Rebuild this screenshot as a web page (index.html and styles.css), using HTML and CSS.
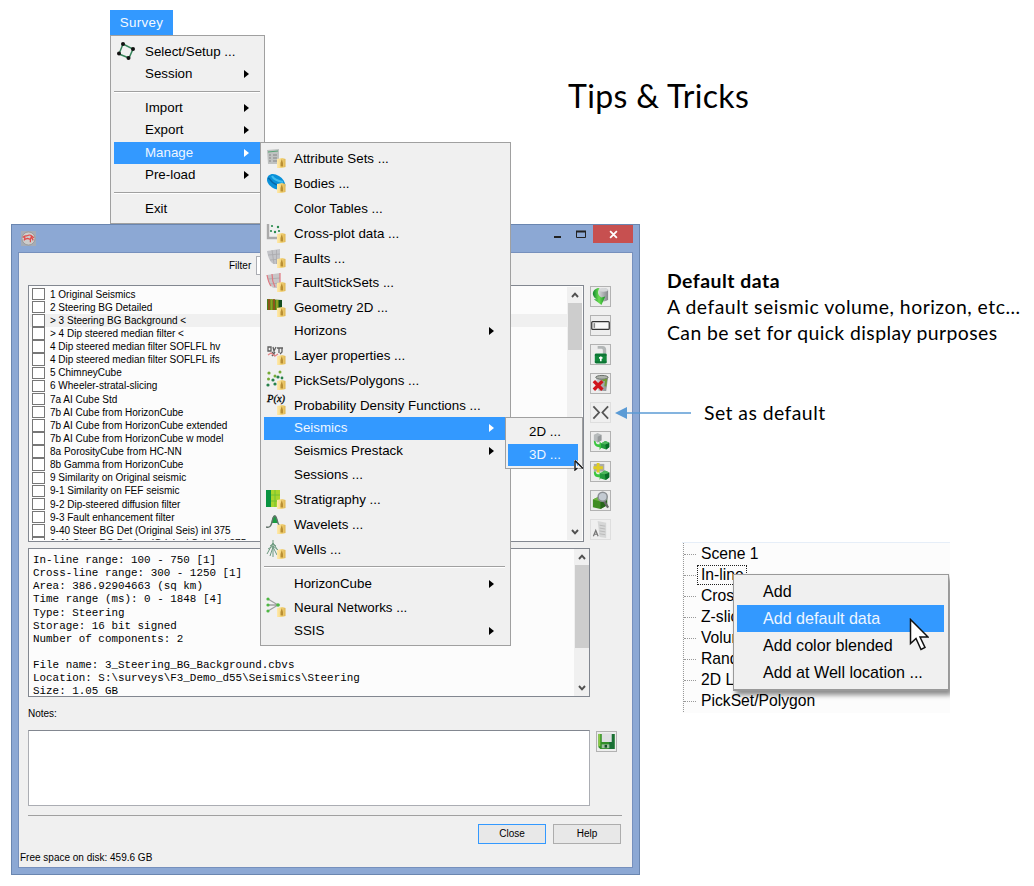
FILE: index.html
```html
<!DOCTYPE html>
<html lang="en">
<head>
<meta charset="utf-8">
<title>Tips &amp; Tricks</title>
<link rel="stylesheet" href="styles.css">
</head>
<body>
<svg class="defs" aria-hidden="true">
  <defs>
    <linearGradient id="gold" x1="0" x2="1"><stop offset="0" stop-color="#ffe9ad"/><stop offset=".5" stop-color="#f5d77c"/><stop offset="1" stop-color="#dfb551"/></linearGradient>
    <linearGradient id="steel" x1="0" x2="1"><stop offset="0" stop-color="#d4d6d8"/><stop offset="1" stop-color="#85888c"/></linearGradient>
    <linearGradient id="leaf" x1="0" x2="1"><stop offset="0" stop-color="#12892f"/><stop offset=".5" stop-color="#6bdd52"/><stop offset="1" stop-color="#159326"/></linearGradient>
    <symbol id="badge" viewBox="0 0 20 20"><path d="M11 11l5-1 3.500 1v8l-4 1H11z" fill="url(#gold)"/><path d="M14.500 18.500V15l1.300-4 1.200 4v3.500z" fill="#b98f35"/></symbol>
    <symbol id="cube" viewBox="0 0 10 10"><path d="M0 3l5-3 5 2v5L6 10 0 8z" fill="#239a3d"/><path d="M5 4l5-2v5L6 10z" fill="#086b28"/><path d="M0 3l5-3 5 2-5 2z" fill="#4cb65d"/></symbol>
  </defs>
</svg>
<main class="slide">
  <h1 class="title">Tips &amp; Tricks</h1>

  <section class="window">
    <header class="titlebar">
      <svg class="app-icon" viewBox="0 0 16 16"><rect width="16" height="16" fill="#a6acb6"/><circle cx="8" cy="8" r="7" fill="#cdcdcc" stroke="#999"/><path d="M2 7c2-3 4-1 5-2s3-1 4 0 2 2 3 2M4 6v3l3-1 3 1 1-3 2 4M3 10l2-2M10 9v3" fill="none" stroke="#e04848" stroke-width="1.3"/></svg>
      <svg class="win-controls" viewBox="0 0 44 18"><path d="M5 12h7" stroke="#222" stroke-width="2"/><path d="M27.5 6.500h9v6h-9z" fill="none" stroke="#222"/><path d="M27 6.500h10" stroke="#222" stroke-width="2"/></svg>
      <div class="close-x"><svg viewBox="0 0 8 8"><path d="M1 1l6 6M7 1L1 7" stroke="#fff" stroke-width="1.6"/></svg></div>
    </header>
    <div class="client">
      <div class="filter"><label>Filter</label><div class="filter-input"></div></div>
      <div class="upper">
        <div class="list">
          <ul class="items">
            <li><i></i>1 Original Seismics</li>
            <li><i></i>2 Steering BG Detailed</li>
            <li class="current"><i></i>&gt; 3 Steering BG Background &lt;</li>
            <li><i></i>&gt; 4 Dip steered median filter &lt;</li>
            <li><i></i>4 Dip steered median filter SOFLFL hv</li>
            <li><i></i>4 Dip steered median filter SOFLFL ifs</li>
            <li><i></i>5 ChimneyCube</li>
            <li><i></i>6 Wheeler-stratal-slicing</li>
            <li><i></i>7a AI Cube Std</li>
            <li><i></i>7b AI Cube from HorizonCube</li>
            <li><i></i>7b AI Cube from HorizonCube extended</li>
            <li><i></i>7b AI Cube from HorizonCube w model</li>
            <li><i></i>8a PorosityCube from HC-NN</li>
            <li><i></i>8b Gamma from HorizonCube</li>
            <li><i></i>9 Similarity on Original seismic</li>
            <li><i></i>9-1 Similarity on FEF seismic</li>
            <li><i></i>9-2 Dip-steered diffusion filter</li>
            <li><i></i>9-3 Fault enhancement filter</li>
            <li><i></i>9-40 Steer BG Det (Original Seis) inl 375</li>
            <li><i></i>9-41 Steer BG Backgr (Original Seis) inl 375</li>
          </ul>
          <div class="scroll scroll-list">
            <svg viewBox="0 0 8 6"><path d="M1 5l3-3.4L7 5" fill="none" stroke="#505050" stroke-width="1.9"/></svg>
            <div class="thumb"></div>
            <svg viewBox="0 0 8 6"><path d="M1 1l3 3.4L7 1" fill="none" stroke="#505050" stroke-width="1.9"/></svg>
          </div>
        </div>
        <div class="tools">
          <div class="tool"><svg viewBox="0 0 20 20"><path d="M8 3c2-2 9-2 10 0v10c-1 3-9 3-10 0z" fill="url(#steel)"/><ellipse cx="13" cy="3" rx="5" ry="2" fill="#d5d7d9"/><path d="M7 1C1 3 0 9 6 13H3l8 6 4-9-4 1C8 9 6 6 9 1z" fill="url(#leaf)"/></svg></div>
          <div class="tool"><svg viewBox="0 0 20 20"><rect x=".8" y="5.800" width="18.400" height="8.400" rx="1" fill="#f7f7f7" stroke="#333" stroke-width="1.300"/><path d="M3.500 7.500v5" stroke="#888" stroke-width="1.600"/></svg></div>
          <div class="tool"><svg viewBox="0 0 20 20"><path d="M7 1h5c3 0 4 2 4 4v5h-3.500V6c0-2-1-2-2-2H7z" fill="#b2b6b6"/><rect x="4" y="9" width="12.500" height="10.500" rx="1.500" fill="#12873b"/><path d="M4 10.500h12.500M4 18h12.500" stroke="#0a6630"/><path d="M10.300 12v5M8.500 13.500h3.600" stroke="#fff" stroke-width="1.700"/></svg></div>
          <div class="tool"><svg viewBox="0 0 20 20"><path d="M5 3h13l-2 15H8z" fill="url(#steel)"/><ellipse cx="11.500" cy="3.500" rx="6.500" ry="2" fill="#aeb2ac" stroke="#666d66"/><path d="M12 7l4-1-1 7" fill="none" stroke="#719c35" stroke-width="2"/><path d="M3 7.500l9 9M12 7.500l-9 9" stroke="#cf151c" stroke-width="3.600"/></svg></div>
          <div class="tool faint"><svg viewBox="0 0 20 20"><path d="M2.500 3.500L8.500 10l-6 6.500M18 3.500L12 10l6 6.500" fill="none" stroke="#555" stroke-width="1.900"/></svg></div>
          <div class="tool"><svg viewBox="0 0 20 20"><path d="M3 3l4-2 4 2v6L7 11 3 9z" fill="#b6babb"/><path d="M7 5l4-2v6l-4 2z" fill="#94989a"/><path d="M3 9c0 5 2 7 6 7v3l4-5-4-4v3c-3 0-4-1-4-3z" fill="#3bc640"/><use href="#cube" x="10.500" y="9" width="9" height="10"/></svg></div>
          <div class="tool"><svg viewBox="0 0 20 20"><path d="M3 2h11v8H3z" fill="#aaa"/><path d="M7.500 1v10M2.500 6h10" stroke="#dfcc24" stroke-width="3"/><path d="M3 10c0 5 2 6 6 6v3l3-5-3-4v3c-3 0-4-1-4-3z" fill="#3bc640"/><use href="#cube" x="9.500" y="8.500" width="10" height="11"/></svg></div>
          <div class="tool"><svg viewBox="0 0 20 20"><path d="M2 9l6-3 9 2v7l-7 4-8-2z" fill="#408d24"/><path d="M10 11l7-3v7l-7 4z" fill="#26651b"/><path d="M2 9l6-3 9 2-7 3z" fill="#6fb541"/><path d="M14 11l4 6.500" stroke="#666" stroke-width="2.400"/><circle cx="12.300" cy="6" r="4.800" fill="#c3cad2" stroke="#8c9095" stroke-width="1.600"/></svg></div>
          <div class="tool faint"><svg viewBox="0 0 20 20"><path d="M7 1l9 2v16l-7-1z" fill="#d6d7d7"/><path d="M9 5.500l6 1M9 8.500l6 1M9 11.500l6 1M9 14.500l6 1" stroke="#b9b9b9" fill="none"/><path d="M2.500 17L5 11l2.500 6M3.500 15h3" stroke="#777" fill="none" stroke-width="1.300"/></svg></div>
        </div>
      </div>
      <div class="info">
<pre>In-line range: 100 - 750 [1]
Cross-line range: 300 - 1250 [1]
Area: 386.92904663 (sq km)
Time range (ms): 0 - 1848 [4]
Type: Steering
Storage: 16 bit signed
Number of components: 2

File name: 3_Steering_BG_Background.cbvs
Location: S:\surveys\F3_Demo_d55\Seismics\Steering
Size: 1.05 GB</pre>
        <div class="scroll scroll-info">
          <svg viewBox="0 0 8 6"><path d="M1 5l3-3.4L7 5" fill="none" stroke="#505050" stroke-width="1.9"/></svg>
          <div class="thumb"></div>
          <svg viewBox="0 0 8 6"><path d="M1 1l3 3.4L7 1" fill="none" stroke="#505050" stroke-width="1.9"/></svg>
        </div>
      </div>
      <div class="notes-label">Notes:</div>
      <div class="notes-row">
        <div class="notes"></div>
        <div class="tool"><svg viewBox="0 0 20 20"><path d="M1.500 2h17v16H3.500l-2-2z" fill="#318f29"/><path d="M14 2h4.500v16H12z" fill="#1a7035"/><path d="M1.500 2h2v13h-2z" fill="#8cca45"/><path d="M5 1.500h10.500v9H5z" fill="#dfe0e3"/><path d="M5 13h8v4H5z" fill="#9cc09f"/><path d="M8 13.500h2.500v3H8z" fill="#174f2b"/></svg></div>
      </div>
      <div class="rule"></div>
      <div class="buttons"><div class="btn primary">Close</div><div class="btn">Help</div></div>
      <div class="status">Free space on disk: 459.6 GB</div>
    </div>
  </section>

  <div class="menu-tab">Survey</div>
  <nav class="menu survey-menu">
    <div class="row tall"><svg class="ic" viewBox="0 0 20 20"><path d="M7 3l10 5-4 9-10-4z" fill="none" stroke="#35845a" stroke-width="1.5"/><g fill="#111"><circle cx="7" cy="3" r="2"/><circle cx="17" cy="8" r="2"/><circle cx="12.500" cy="17" r="2"/><circle cx="3" cy="12.500" r="2"/></g></svg>Select/Setup ...</div>
    <div class="row sub">Session</div>
    <div class="sep"></div>
    <div class="row sub">Import</div>
    <div class="row sub">Export</div>
    <div class="row sub on">Manage</div>
    <div class="row sub">Pre-load</div>
    <div class="sep"></div>
    <div class="row">Exit</div>
  </nav>

  <nav class="menu manage-menu">
    <div class="row tall"><svg class="ic" viewBox="0 0 20 20"><path d="M1 2l12-1v15H2z" fill="#bfc2c1"/><path d="M2 4l10-1" stroke="#58a376"/><path d="M3 7h2M7 7h4M3 10h2M7 10h4M3 13h2M7 13h4" stroke="#999" stroke-width="1.500"/><use href="#badge"/></svg>Attribute Sets ...</div>
    <div class="row tall"><svg class="ic" viewBox="0 0 20 20"><path d="M1 7c0-6 6-8 12-4 5 3 7 8 6 11-3 4-8 3-12 1-3-2-6-5-6-8z" fill="#0a91d9"/><path d="M2 5c3 1 3 5 7 6s5 3 7 5" fill="none" stroke="#0768a8" stroke-width="1.600"/><path d="M6 3c2 4 6 5 11 6" fill="none" stroke="#40bdf0" stroke-width="2"/><use href="#badge"/></svg>Bodies ...</div>
    <div class="row tall">Color Tables ...</div>
    <div class="row tall"><svg class="ic" viewBox="0 0 20 20"><path d="M2 1v14h11" fill="none" stroke="#aaa" stroke-width="2.400"/><g fill="#298a4d"><circle cx="6" cy="3" r="1.100"/><circle cx="5" cy="8" r="1.100"/><circle cx="9" cy="9" r="1.200"/><circle cx="12" cy="4" r="1.200"/><circle cx="13" cy="8" r="1.100"/></g><use href="#badge"/></svg>Cross-plot data ...</div>
    <div class="row tall"><svg class="ic" viewBox="0 0 20 20"><path d="M1 3l13-2v15H8C4 15 2 9 1 3z" fill="#c3c4c8"/><path d="M6 2l2 14M10.500 2v14M2 7l12-1M4 12l10-1" fill="none" stroke="#a9aaad" stroke-width=".8"/><use href="#badge"/></svg>Faults ...</div>
    <div class="row tall"><svg class="ic" viewBox="0 0 20 20"><path d="M1 3l13-2v15H8C4 15 2 9 1 3z" fill="#c8c6c7"/><path d="M2 7l12-1M4 12l10-1" stroke="#aaa" stroke-width=".8"/><path d="M1 3c1 5 2 9 4 11M6 2c0 5 1 9 3 13M14 1v12" fill="none" stroke="#e07880" stroke-width="1.200"/><use href="#badge"/></svg>FaultStickSets ...</div>
    <div class="row tall"><svg class="ic" viewBox="0 0 20 20"><path d="M1 2l15 1v10H1z" fill="#4a801c"/><path d="M3 2v11M8 2v11" stroke="#9d4b1b" stroke-width="1.600"/><path d="M5.500 2v11M11 3v10" stroke="#8da223" stroke-width="2"/><path d="M14.500 3v10" stroke="#164e20" stroke-width="3"/><use href="#badge"/></svg>Geometry 2D ...</div>
    <div class="row sub">Horizons</div>
    <div class="row tall"><svg class="ic" viewBox="0 0 20 20"><path d="M2 2v4h3V2zM7 2l1 4 2-4M11 3h6M13 3v5M16 3v4l-2 2M6 7l3 4M9 7l-3 4" fill="none" stroke="#606060" stroke-width="1.300"/><path d="M2 10l3-2 4 3 3-2" fill="none" stroke="#e48585" stroke-width="1.400"/><use href="#badge"/></svg>Layer properties ...</div>
    <div class="row tall"><svg class="ic" viewBox="0 0 20 20"><g fill="#75aa36"><circle cx="3" cy="3" r="1.600"/><circle cx="9" cy="6" r="1.500"/><circle cx="14" cy="2" r="1.500"/><circle cx="2.500" cy="9" r="1.500"/></g><g fill="#27814a"><circle cx="7" cy="10" r="1.600"/><circle cx="12" cy="7" r="1.600"/><circle cx="2" cy="15" r="1.600"/><circle cx="9" cy="14" r="1.600"/><circle cx="16" cy="8" r="1.400"/></g><use href="#badge"/></svg>PickSets/Polygons ...</div>
    <div class="row tall"><svg class="ic" viewBox="0 0 20 20"><use href="#badge"/></svg><span class="ic px">P(x)</span>Probability Density Functions ...</div>
    <div class="row sub on">Seismics</div>
    <div class="row sub">Seismics Prestack</div>
    <div class="row tall">Sessions ...</div>
    <div class="row tall"><svg class="ic" viewBox="0 0 20 20"><path d="M0 1h5v17H0z" fill="#099341"/><path d="M5 1h9v17H5z" fill="#a8d52d"/><path d="M5 6h9M5 12h9M9 1v17" stroke="#6cbf33" stroke-width=".9"/><use href="#badge"/></svg>Stratigraphy ...</div>
    <div class="row tall"><svg class="ic" viewBox="0 0 20 20"><path d="M5.500 9c1-10 5-10 6.500 0z" fill="#199e41"/><path d="M0 13c4 1 5-1 6-5s1-6 3-6 2 7 4 9 4 1 5 2" fill="none" stroke="#627269" stroke-width="1.400"/><use href="#badge"/></svg>Wavelets ...</div>
    <div class="row tall"><svg class="ic" viewBox="0 0 20 20"><path d="M7 1v17M7 4L1 15M7 4l6 9M7 8l-3 9M7 8l4 8M2 10l5-3 5 4M4 7l3-2 3 2" fill="none" stroke="#6d9a80"/><use href="#badge"/></svg>Wells ...</div>
    <div class="sep"></div>
    <div class="row sub">HorizonCube</div>
    <div class="row tall"><svg class="ic" viewBox="0 0 20 20"><path d="M2 2l10 6L2 8h10L2 14" fill="none" stroke="#a0a0a0" stroke-width="1.300"/><g fill="#4eb843"><circle cx="2" cy="2" r="1.600"/><circle cx="2" cy="8" r="1.600"/><circle cx="2" cy="14" r="1.600"/><circle cx="12" cy="8" r="1.800"/></g><use href="#badge"/></svg>Neural Networks ...</div>
    <div class="row sub">SSIS</div>
  </nav>

  <nav class="menu seismics-menu">
    <div class="row">2D ...</div>
    <div class="row on">3D ...</div>
  </nav>
  <svg class="cursor-small" viewBox="0 0 9 11"><path d="M1 0v10l3-2.500M1 0l8 8" fill="#fff" stroke="#fff" stroke-width="2"/><path d="M1 .500v9.500l2.500-2M1 .500l8 8" fill="none" stroke="#111" stroke-width="1.400"/></svg>

  <section class="notes-text">
    <strong>Default data</strong>
    <p class="l2">A default seismic volume, horizon, etc…</p>
    <p class="l3">Can be set for quick display purposes</p>
  </section>
  <div class="callout">
    <svg viewBox="0 0 76 12"><path d="M10 6h66" stroke="#5b9bd5" stroke-width="1.300"/><path d="M0 6l12-6v12z" fill="#5b9bd5"/></svg>
    <span>Set as default</span>
  </div>

  <section class="tree">
    <ul>
      <li><span>Scene 1</span></li>
      <li><span class="focus">In-line</span></li>
      <li><span>Cross-line</span></li>
      <li><span>Z-slice</span></li>
      <li><span>Volume</span></li>
      <li><span>Random line</span></li>
      <li><span>2D Line</span></li>
      <li><span>PickSet/Polygon</span></li>
    </ul>
    <nav class="context">
      <div>Add</div>
      <div class="on">Add default data</div>
      <div>Add color blended</div>
      <div>Add at Well location ...</div>
    </nav>
    <svg class="cursor" viewBox="0 0 20 34"><path d="M1.500 1.500v24l5.500-5 5 11 4-2-5-10.500h8z" fill="#fff" stroke="#111" stroke-width="1.500"/></svg>
  </section>
</main>
</body>
</html>
```
FILE: styles.css
```css
* { box-sizing: border-box; }
body { margin: 0; background: #fff; color: #000; font-family: "Liberation Sans", Arial, sans-serif; }
ul, p, h1, pre { margin: 0; padding: 0; }
ul { list-style: none; }
svg { display: block; }
.defs { position: absolute; width: 0; height: 0; }
.slide { position: relative; width: 1034px; height: 886px; overflow: hidden; background: #fff; }

.title { position: absolute; left: 568px; top: 75px; font: 400 32px/42px Lato, sans-serif; letter-spacing: .35px; white-space: nowrap; }

/* Manager window */
.window { position: absolute; left: 11px; top: 224px; width: 629px; height: 651px; background: #8ca8d4; border: 1px solid #6a86b0; padding: 0 6px 6px; display: flex; flex-direction: column; font-size: 10px; }
.titlebar { height: 27px; flex: none; display: flex; align-items: flex-start; }
.app-icon { width: 15px; height: 15px; margin: 6px 0 0 3px; }
.win-controls { width: 44px; height: 18px; margin-left: auto; }
.close-x { width: 40px; height: 18px; background: #c75050; display: flex; align-items: center; justify-content: center; }
.close-x svg { width: 9px; height: 9px; }
.client { flex: 1; min-height: 0; background: #f0f0f0; border: 1px solid #7690bd; padding: 0 11px 0 9px; display: flex; flex-direction: column; }
.filter { height: 32px; display: flex; padding: 3px 0 0 201px; gap: 5px; line-height: 20px; }
.filter-input { width: 180px; height: 19px; border: 1px solid #abadb3; background: #fff; }
.upper { display: flex; height: 257px; gap: 6px; flex: none; }
.list { width: 556px; border: 1px solid #828790; background: #fcfcfc; display: flex; padding: 1px; overflow: hidden; }
.items { flex: 1; min-width: 0; height: 253px; overflow: hidden; padding-top: .5px; }
.items li { height: 13.13px; display: flex; align-items: center; gap: 5.5px; padding-left: 2px; white-space: nowrap; line-height: 13px; }
.items i { width: 12.5px; height: 12.5px; border: 1px solid #777; background: #fff; flex: none; }
.items .current { background: #f0f0f0; }
.scroll { width: 15px; flex: none; background: #f0f0f0; display: flex; flex-direction: column; align-items: center; }
.scroll svg { width: 8px; height: 6px; flex: none; }
.scroll svg:first-child { margin: 5px 0; }
.scroll svg:last-child { margin: auto 0 5px; }
.thumb { width: 14px; background: #cdcdcd; }
.scroll-list .thumb { height: 47px; }
.scroll-info .thumb { height: 83px; }
.tools { display: flex; flex-direction: column; gap: 8.1px; padding-top: 1px; }
.tool { width: 21px; height: 21px; flex: none; border: 1px solid #b2b2b2; background: #ededed; }
.tool svg { width: 19px; height: 19px; }
.tool.faint { border-color: #dedede; background: #efefef; }
.info { width: 562px; height: 149px; margin-top: 6px; flex: none; border: 1px solid #828790; background: #fcfcfc; display: flex; justify-content: space-between; overflow: hidden; }
.info pre { font: 10.9px/13.13px "Liberation Mono", monospace; padding: 5px 0 0 4px; }
.notes-label { height: 33px; padding-top: 9.500px; line-height: 13px; flex: none; }
.notes-row { display: flex; gap: 6px; align-items: flex-start; }
.notes { width: 562px; height: 76px; border: 1px solid #abadb3; border-top-color: #828790; background: #fff; }
.notes-row .tool { margin-top: 1px; }
.rule { height: 1px; background: #a0a0a0; margin: 9px 0 8px; width: 594px; }
.buttons { display: flex; justify-content: flex-end; gap: 7px; }
.btn { width: 68px; height: 20px; border: 1px solid #adadad; background: #e8e8e8; text-align: center; line-height: 18px; }
.btn.primary { border-color: #3399ff; }
.status { margin: 7px 0 0 -8px; line-height: 13px; }

/* Cascading menus */
.menu-tab { position: absolute; left: 110px; top: 10px; width: 63px; height: 25px; background: #3399ff; color: #f4f9ff; font-size: 13.33px; letter-spacing: .3px; line-height: 25px; text-align: center; }
.menu { position: absolute; background: #f0f0f0; border: 1px solid #a0a0a0; font-size: 13.33px; white-space: nowrap; padding-left: 3px; }
.row { position: relative; height: 22.5px; line-height: 22.5px; padding-left: 31px; }
.row.tall { height: 24.9px; line-height: 25px; }
.row.on { background: #3399ff; color: #eef6ff; }
.row.sub::after { content: ""; position: absolute; right: 11px; top: 7px; border: 4.500px solid transparent; border-left: 5.500px solid #000; border-right: 0; }
.row.sub.on::after { border-left-color: #fff; }
.ic { position: absolute; left: 2px; top: 2px; width: 20px; height: 20px; }
.px { font: italic 400 10.5px/10px "Liberation Serif", serif; top: 1px; left: 3px; -webkit-text-stroke: .3px #000; }
.sep { height: 1px; background: #a0a0a0; margin: 5px 0; box-shadow: 0 1px #fff; }
.survey-menu { left: 110px; top: 35px; width: 155px; height: 189px; padding-top: 2.600px; padding-right: 4px; }
.survey-menu .ic { top: 2px; }
.manage-menu { left: 260px; top: 142px; width: 251px; height: 504px; padding-top: 3px; padding-right: 5px; }
.manage-menu .row { padding-left: 30px; }
.manage-menu .sep { margin: 4px 0 6px; }
.seismics-menu { left: 505px; top: 417px; width: 78px; height: 52px; padding: 3px 4px 0 2px; }
.seismics-menu .row { padding-left: 21px; }
.cursor-small { position: absolute; left: 574px; top: 460px; width: 9px; height: 11px; }

/* Slide text */
.notes-text { position: absolute; left: 667px; top: 268px; font: 19.4px/26px Lato, sans-serif; white-space: nowrap; }
.notes-text strong { display: block; font-weight: 700; letter-spacing: .5px; }
.notes-text .l2 { letter-spacing: .5px; }
.notes-text .l3 { letter-spacing: .41px; }
.callout { position: absolute; left: 615px; top: 400px; display: flex; align-items: center; gap: 13px; font: 19.400px/26px Lato, sans-serif; letter-spacing: .45px; white-space: nowrap; }
.callout svg { width: 76px; height: 12px; }

/* Scene tree */
.tree { position: absolute; left: 682px; top: 542px; width: 268px; height: 171px; background: #fcfcfc; border-top: 1px solid #e6eef8; overflow: hidden; font-size: 15.700px; }
.tree ul { margin-left: 1px; border-left: 1px dotted #999; padding-top: .5px; height: 171px; }
.tree li { height: 21px; display: flex; align-items: center; white-space: nowrap; line-height: 20px; }
.tree li::before { content: ""; width: 12px; border-top: 1px dotted #999; margin-right: 2px; }
.tree li span { padding-left: 3px; }
.tree .focus { outline: 1px dotted #222; outline-offset: 0; line-height: 18px; padding-right: 2px; }
.context { position: absolute; left: 51px; top: 31px; width: 216px; height: 117px; background: #f0f0f0; border: 1px solid #999; border-width: 1px 1px 2px; box-shadow: 3px 4px 5px rgba(0,0,0,.45); padding: 3px 4px 0 3px; font-size: 16.100px; white-space: nowrap; }
.context div { height: 27px; line-height: 27px; padding-left: 26px; }
.context .on { background: #3399ff; color: #eef6ff; }
.cursor { position: absolute; left: 227px; top: 75px; width: 20px; height: 34px; }
```
